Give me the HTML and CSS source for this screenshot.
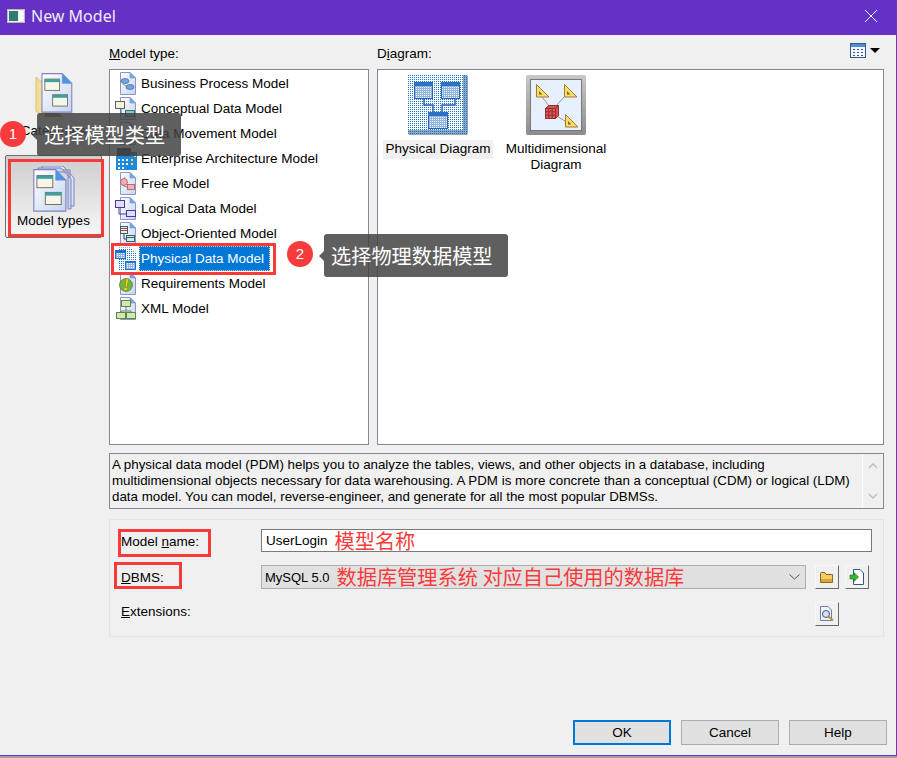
FILE: index.html
```html
<!DOCTYPE html>
<html lang="en">
<head>
    <meta charset="UTF-8">
    <title>New Model</title>
    <link rel="stylesheet" href="styles.css">
</head>
<body>
    <svg class="defs" width="0" height="0">
        <defs>
            <linearGradient id="pageFill" x1="0" y1="0" x2="1" y2="1">
                <stop offset="0" stop-color="#ffffff"/>
                <stop offset="1" stop-color="#c5d5f2"/>
            </linearGradient>
            <linearGradient id="frameFill" x1="0" y1="0" x2="0" y2="1">
                <stop offset="0" stop-color="#c8c8c8"/>
                <stop offset="1" stop-color="#8c8c8c"/>
            </linearGradient>
            <pattern id="dotsBlue" width="2" height="2" patternUnits="userSpaceOnUse">
                <rect width="2" height="2" fill="#fff"/>
                <rect width="1" height="1" fill="#1a74cf"/>
            </pattern>
            <pattern id="dotsFrame" width="2" height="2" patternUnits="userSpaceOnUse">
                <rect width="2" height="2" fill="#8fa7bf"/>
                <rect width="1" height="1" fill="#1a74cf"/>
            </pattern>
            <pattern id="dotsBar" width="2" height="2" patternUnits="userSpaceOnUse">
                <rect width="2" height="2" fill="#8fb4e2"/>
                <rect width="1" height="1" fill="#ffffff"/>
            </pattern>
            <symbol id="page" viewBox="0 0 20 24">
                <path d="M3.5.5H13L18.5 6V22.5H3.5Z" fill="url(#pageFill)" stroke="#8d96c0"/>
                <path d="M13 .5V6H18.5Z" fill="#6fa6e6" stroke="#7f95c8" stroke-width=".6"/>
            </symbol>
            <symbol id="bigPage" viewBox="0 0 36 46">
                <path d="M.7.7H24L35 12V45H.7Z" fill="url(#pageFill)" stroke="#8080c0" stroke-width="1.2"/>
                <path d="M24 .7V12H35Z" fill="#4f93e8" stroke="#7f95c8" stroke-width=".6"/>
                <rect x="4" y="7" width="17" height="13" fill="#f6f6ea" stroke="#6e6a55"/>
                <rect x="4" y="7" width="17" height="3.5" fill="#3f9ea0"/>
                <rect x="13" y="25" width="17" height="13" fill="#f6f6ea" stroke="#6e6a55"/>
                <rect x="13" y="25" width="17" height="3.5" fill="#3f9ea0"/>
            </symbol>
        </defs>
    </svg>

    <div class="dialog">
        <div class="titlebar">
            <svg class="title-icon" width="18" height="14" viewBox="0 0 18 14">
                <rect x=".5" y=".5" width="17" height="13" fill="#eef0ee" stroke="#b9b9b9"/>
                <rect x="2" y="2" width="9" height="10" fill="#2f7d72"/>
                <rect x="12" y="2" width="4" height="10" fill="#fff"/>
            </svg>
            <span class="title-text">New Model</span>
            <svg class="close-icon" width="12" height="12" viewBox="0 0 12 12">
                <path d="M0 0L12 12M12 0L0 12" stroke="#fff" stroke-width="1" fill="none"/>
            </svg>
        </div>

        <div class="top">
            <div class="sidebar">
                <div class="side-item">
                    <svg class="side-icon" width="38" height="46" viewBox="0 0 38 46">
                        <path d="M1 4L10 12V44L1 38Z" fill="#f3dd9a" stroke="#d9bf72"/>
                        <path d="M10 44H28L24 40H10Z" fill="#8f8458"/>
                        <use href="#bigPage" x="6" y="0" width="32" height="40"/>
                    </svg>
                    <span>Categories</span>
                </div>
                <div class="side-item side-active">
                    <svg class="side-icon" width="42" height="46" viewBox="0 0 42 46">
                        <path d="M9 0H30L41 12V40H37V4H9Z" fill="#dbe4f6" stroke="#8080c0"/>
                        <path d="M5 2H28L38 13V43H35V6H5Z" fill="#c5d5f2" stroke="#8080c0"/>
                        <use href="#bigPage" x="0" y="3" width="34" height="43"/>
                    </svg>
                    <span>Model types</span>
                </div>
            </div>

            <div class="pane pane-types">
                <div class="pane-label"><u>M</u>odel type:</div>
                <div class="box type-list">
                    <div class="type-row">
                        <svg class="type-icon" width="24" height="24" viewBox="0 0 24 24">
                            <use href="#page" x="2" y="0" width="20" height="24"/>
                            <path d="M8 12L15 17" stroke="#8a8a8a"/>
                            <ellipse cx="10" cy="9" rx="4" ry="2.5" fill="#6fa6e6" stroke="#44618f" stroke-width=".7"/>
                            <ellipse cx="15" cy="15" rx="4" ry="2.5" fill="#6fa6e6" stroke="#44618f" stroke-width=".7"/>
                        </svg>
                        <span class="type-name">Business Process Model</span>
                    </div>
                    <div class="type-row">
                        <svg class="type-icon" width="24" height="24" viewBox="0 0 24 24">
                            <use href="#page" x="2" y="0" width="20" height="24"/>
                            <path d="M6 10V17H10" stroke="#44618f" fill="none"/>
                            <rect x=".5" y="4.5" width="9" height="7" fill="#f5f3d8" stroke="#59665f"/>
                            <rect x="10.5" y="13.500" width="9" height="6" fill="#8fc4c8" stroke="#3c6f6f"/>
                        </svg>
                        <span class="type-name">Conceptual Data Model</span>
                    </div>
                    <div class="type-row">
                        <svg class="type-icon" width="24" height="24" viewBox="0 0 24 24">
                            <use href="#page" x="2" y="0" width="20" height="24"/>
                        </svg>
                        <span class="type-name">Data Movement Model</span>
                    </div>
                    <div class="type-row">
                        <svg class="type-icon" width="24" height="24" viewBox="0 0 24 24">
                            <rect x="2" y="1" width="14" height="8" fill="#33475e"/>
                            <rect x="15" y="5" width="7" height="6" fill="#1e88e0"/>
                            <rect x="1" y="9" width="21" height="14" fill="#1e88e0"/>
                            <path d="M3 12h2v2H3zM7 12h2v2H7zM11 12h2v2h-2zM3 16h2v2H3zM7 16h2v2H7zM11 16h2v2h-2zM3 20h2v2H3zM7 20h2v2H7z" fill="#fff"/>
                            <path d="M16 12h2v2h-2zM16 16h2v2h-2zM19 8h2v2h-2z" fill="#ffd84a"/>
                        </svg>
                        <span class="type-name">Enterprise Architecture Model</span>
                    </div>
                    <div class="type-row">
                        <svg class="type-icon" width="24" height="24" viewBox="0 0 24 24">
                            <use href="#page" x="2" y="0" width="20" height="24"/>
                            <path d="M10 5L7 13L14 16" stroke="#8a8a8a" fill="none"/>
                            <circle cx="9" cy="10" r="3.4" fill="#f5b0b0" stroke="#b05555" stroke-width=".8"/>
                            <rect x="12.5" y="12.5" width="7" height="5" fill="#f5b0b0" stroke="#b05555" stroke-width=".8"/>
                        </svg>
                        <span class="type-name">Free Model</span>
                    </div>
                    <div class="type-row">
                        <svg class="type-icon" width="24" height="24" viewBox="0 0 24 24">
                            <use href="#page" x="2" y="0" width="20" height="24"/>
                            <path d="M4 10V17H11" stroke="#4a3a9f" fill="none"/>
                            <rect x=".5" y="3.5" width="9" height="7" fill="#e4dcf5" stroke="#4a3a9f"/>
                            <rect x="11.5" y="13.5" width="9" height="6" fill="#e4dcf5" stroke="#4a3a9f"/>
                        </svg>
                        <span class="type-name">Logical Data Model</span>
                    </div>
                    <div class="type-row">
                        <svg class="type-icon" width="24" height="24" viewBox="0 0 24 24">
                            <use href="#page" x="2" y="0" width="20" height="24"/>
                            <path d="M9 12V17H12" stroke="#33475e" fill="none"/>
                            <rect x="5.5" y="4.5" width="7" height="7" fill="#e5f0f0" stroke="#33626f"/>
                            <path d="M6 6.5h6M6 8.5h6" stroke="#c23b3b"/>
                            <rect x="11.5" y="13.5" width="8" height="6" fill="#cfe8ea" stroke="#33626f"/>
                            <path d="M12 15.5h7" stroke="#33626f"/>
                        </svg>
                        <span class="type-name">Object-Oriented Model</span>
                    </div>
                    <div class="type-row type-selected">
                        <svg class="type-icon" width="24" height="24" viewBox="0 0 24 24">
                            <path d="M3 .5H15L21.5 6V23.5H3Z" fill="url(#dotsBlue)"/>
                            <rect x="0" y="3" width="11" height="9" fill="#1a74cf"/>
                            <rect x="1" y="6" width="9" height="5" fill="url(#dotsBar)"/>
                            <rect x="10" y="14" width="11" height="9" fill="#1a74cf"/>
                            <rect x="11" y="16" width="9" height="6" fill="url(#dotsBar)"/>
                        </svg>
                        <span class="type-name">Physical Data Model</span>
                    </div>
                    <div class="type-row">
                        <svg class="type-icon" width="24" height="24" viewBox="0 0 24 24">
                            <use href="#page" x="2" y="0" width="20" height="24"/>
                            <circle cx="11" cy="13" r="6.5" fill="#74b33c" stroke="#4d7c25" stroke-width=".7"/>
                            <path d="M11 6.5L13.5 7L12 15H10.2Z" fill="#f6d21f" stroke="#8d7a18" stroke-width=".5"/>
                            <circle cx="10.6" cy="17" r="1.3" fill="#f6d21f"/>
                        </svg>
                        <span class="type-name">Requirements Model</span>
                    </div>
                    <div class="type-row">
                        <svg class="type-icon" width="24" height="24" viewBox="0 0 24 24">
                            <use href="#page" x="2" y="0" width="20" height="24"/>
                            <path d="M11 9V14M6 14H16V16M6 14V16" stroke="#777" fill="none"/>
                            <rect x="6.5" y="3.5" width="9" height="6" fill="#cfe8b8" stroke="#5f8a3c"/>
                            <rect x="1.5" y="15.5" width="9" height="6" fill="#cfe8b8" stroke="#5f8a3c"/>
                            <rect x="11.5" y="15.5" width="9" height="6" fill="#cfe8b8" stroke="#5f8a3c"/>
                        </svg>
                        <span class="type-name">XML Model</span>
                    </div>
                </div>
            </div>

            <div class="pane pane-diagram">
                <div class="pane-label diagram-head">
                    <span>D<u>i</u>agram:</span>
                    <span class="view-switch">
                        <svg width="16" height="15" viewBox="0 0 16 15">
                            <rect x=".5" y=".5" width="15" height="14" fill="#f3f7fc" stroke="#35588a"/>
                            <rect x="1" y="1" width="14" height="3" fill="#4f8fd8"/>
                            <path d="M3 6h2v1H3zM7 6h2v1H7zM11 6h2v1h-2zM3 9h2v1H3zM7 9h2v1H7zM11 9h2v1h-2zM3 12h2v1H3zM7 12h2v1H7zM11 12h2v1h-2z" fill="#35588a"/>
                        </svg>
                        <span class="caret"></span>
                    </span>
                </div>
                <div class="box diagram-list">
                    <div class="diagram-item">
                        <svg width="60" height="60" viewBox="0 0 60 60">
                            <rect width="60" height="60" rx="2" fill="url(#dotsFrame)"/>
                            <rect x="0" y="0" width="55" height="55" fill="url(#dotsBlue)"/>
                            <path d="M16 23V30H25V37M47 23V30H34V37" stroke="#2a62b8" stroke-width="1.4" fill="none"/>
                            <rect x="6.5" y="7.5" width="18" height="16" fill="url(#dotsBar)" stroke="#2a62b8"/>
                            <rect x="6" y="7" width="19" height="4" fill="#2a72c4"/>
                            <rect x="33.5" y="7.5" width="18" height="16" fill="url(#dotsBar)" stroke="#2a62b8"/>
                            <rect x="33" y="7" width="19" height="4" fill="#2a72c4"/>
                            <rect x="20.5" y="37.5" width="19" height="16" fill="url(#dotsBar)" stroke="#2a62b8"/>
                            <rect x="20" y="37" width="20" height="4" fill="#2a72c4"/>
                        </svg>
                        <span class="diagram-name diagram-current">Physical Diagram</span>
                    </div>
                    <div class="diagram-item">
                        <svg width="60" height="60" viewBox="0 0 60 60">
                            <rect width="60" height="60" rx="2" fill="url(#frameFill)"/>
                            <rect x="4.5" y="4.5" width="51" height="51" fill="#e6f1fd" stroke="#777"/>
                            <path d="M16 22L24 32M38 22L30 31M31 41L42 48" stroke="#999" fill="none"/>
                            <path d="M10.5 9.5L23 22H10.5Z M38.5 9.5L51 22H38.5Z M39.500 39.500L52 52H39.500Z" fill="#fadf62" stroke="#a8763e"/>
                            <path d="M13 16L16.500 19.500H13Z M41 16L44.500 19.500H41Z M42 46L45.500 49.500H42Z" fill="#7a6238"/>
                            <path d="M19.500 33.500L22.500 30.500H32.500V40.500L29.500 43.500Z" fill="#d85050" stroke="#8d2f2f"/>
                            <rect x="19.500" y="33.500" width="10" height="10" fill="#e25b5b" stroke="#8d2f2f"/>
                            <path d="M19.500 36.800H29.500M19.500 40.200H29.500M22.800 33.500V43.500M26.200 33.500V43.500M29.500 33.500L32.500 30.500" stroke="#8d2f2f" fill="none"/>
                        </svg>
                        <span class="diagram-name">Multidimensional Diagram</span>
                    </div>
                </div>
            </div>
        </div>

        <div class="desc">
            <p>A physical data model (PDM) helps you to analyze the tables, views, and other objects in a database, including<br>multidimensional objects necessary for data warehousing. A PDM is more concrete than a conceptual (CDM) or logical (LDM)<br>data model. You can model, reverse-engineer, and generate for all the most popular DBMSs.</p>
            <div class="desc-scroll">
                <svg width="10" height="6" viewBox="0 0 10 6"><path d="M1 5L5 1L9 5" stroke="#bdbdbd" stroke-width="1.4" fill="none"/></svg>
                <svg width="10" height="6" viewBox="0 0 10 6"><path d="M1 1L5 5L9 1" stroke="#bdbdbd" stroke-width="1.4" fill="none"/></svg>
            </div>
        </div>

        <div class="group">
            <div class="form-row row-name">
                <div class="form-label">Model <u>n</u>ame:</div>
                <div class="text-input">UserLogin <span class="note note-name">模型名称</span></div>
            </div>
            <div class="form-row row-dbms">
                <div class="form-label"><u>D</u>BMS:</div>
                <div class="select-input">
                    <span class="select-value">MySQL 5.0</span>
                    <span class="note note-dbms">数据库管理系统 对应自己使用的数据库</span>
                    <svg class="select-arrow" width="11" height="6" viewBox="0 0 11 6"><path d="M.5.5L5.500 5L10.500.5" stroke="#555" fill="none"/></svg>
                </div>
                <div class="tool-btn">
                    <svg width="16" height="14" viewBox="0 0 16 14">
                        <path d="M1.500 3.500V12.500H13.500V4.500H7L6 2.500H2Z" fill="#f3cc62" stroke="#8d6a1f"/>
                        <rect x="2" y="9" width="11" height="3" fill="#dba63a"/>
                    </svg>
                </div>
                <div class="tool-btn">
                    <svg width="16" height="16" viewBox="0 0 16 16">
                        <path d="M4.500.5H11L14.500 4V15.500H4.500Z" fill="#fff" stroke="#35588a"/>
                        <path d="M1 6H5V3.500L9.500 8L5 12.500V10H1Z" fill="#39b52f" stroke="#1d6f1a" stroke-width=".6"/>
                    </svg>
                </div>
            </div>
            <div class="form-row row-ext">
                <div class="form-label"><u>E</u>xtensions:</div>
                <div class="tool-btn ext-btn">
                    <svg width="16" height="16" viewBox="0 0 16 16">
                        <path d="M1.500.5H9L12.500 4V14.500H1.500Z" fill="#eef3fb" stroke="#6b7fa8"/>
                        <circle cx="7" cy="8" r="3.500" fill="#cfe2f7" stroke="#555"/>
                        <path d="M9.500 10.500L14 14.500" stroke="#c8843a" stroke-width="2"/>
                    </svg>
                </div>
            </div>
        </div>

        <div class="footer">
            <div class="btn btn-default">OK</div>
            <div class="btn">Cancel</div>
            <div class="btn">Help</div>
        </div>

        <!-- annotations drawn over the screenshot -->
        <div class="mark mark-types"></div>
        <div class="mark mark-pdm"></div>
        <div class="mark mark-name"></div>
        <div class="mark mark-dbms"></div>

        <div class="badge badge-one">1</div>
        <div class="tip tip-one">选择模型类型</div>
        <div class="badge badge-two">2</div>
        <div class="tip tip-two">选择物理数据模型</div>
    </div>
</body>
</html>
```

FILE: styles.css
```css
* {
    box-sizing: border-box;
}
html, body {
    margin: 0;
    padding: 0;
}
body {
    font-family: "Liberation Sans", Arial, sans-serif;
    font-size: 13.5px;
    color: #000;
    background: #a0a0a0;
}
.defs {
    position: absolute;
}
.dialog {
    position: relative;
    display: flex;
    flex-direction: column;
    width: 897px;
    height: 756px;
    overflow: hidden;
    background: #f0f0f0;
    border-right: 1px solid #6a35c8;
    border-bottom: 1px solid #6a35c8;
}

/* title bar */
.titlebar {
    display: flex;
    align-items: center;
    flex: none;
    height: 35px;
    padding: 0 14px 4px 7px;
    background: #6530c5;
    color: #f0eafa;
}
.title-icon {
    margin-right: 6px;
}
.title-text {
    font-family: "Noto Sans", sans-serif;
    font-size: 16px;
}
.close-icon {
    margin-left: auto;
    margin-right: 5px;
}

/* top area */
.top {
    display: flex;
    flex: none;
    height: 410px;
}
.sidebar {
    flex: none;
    width: 109px;
    padding: 37px 7px 0 5px;
}
.side-item {
    display: flex;
    flex-direction: column;
    align-items: center;
    height: 83px;
    padding-top: 1px;
    text-align: center;
}
.side-item span {
    margin-top: 4px;
}
.side-active {
    padding-top: 10px;
    border: 1px solid #6f6f6f;
    border-radius: 2px;
    background: linear-gradient(#cdcdcd, #f7f7f7);
}
.side-active span {
    margin-top: 1px;
}
.pane {
    display: flex;
    flex-direction: column;
}
.pane-types {
    width: 260px;
}
.pane-diagram {
    width: 507px;
    margin-left: 8px;
}
.pane-label {
    height: 34px;
    padding-top: 11px;
}
.diagram-head {
    display: flex;
    justify-content: space-between;
    padding-top: 11px;
}
.view-switch {
    display: flex;
    align-items: center;
    height: 16px;
    margin-top: -4px;
    margin-right: 4px;
}
.caret {
    width: 0;
    height: 0;
    margin-left: 4px;
    border-top: 5px solid #000;
    border-left: 5px solid transparent;
    border-right: 5px solid transparent;
}
.box {
    flex: 1;
    background: #fff;
    border: 1px solid #828790;
}

/* model type list */
.type-list {
    padding-top: 1px;
}
.type-row {
    display: flex;
    align-items: center;
    height: 25px;
    padding-left: 5px;
}
.type-icon {
    flex: none;
}
.type-name {
    display: flex;
    align-items: center;
    height: 25px;
    padding: 0 6px 0 2px;
    white-space: nowrap;
}
.type-selected .type-name {
    background: #0078d7;
    color: #fff;
    outline: 1px dotted #f4c896;
    outline-offset: -1px;
}

/* diagram list */
.diagram-list {
    display: flex;
    align-items: flex-start;
    padding: 5px 0 0 1px;
}
.diagram-item {
    display: flex;
    flex-direction: column;
    align-items: center;
    width: 118px;
    text-align: center;
}
.diagram-name {
    width: 110px;
    margin-top: 5px;
    padding: 1px 0 2px;
    line-height: 16px;
}
.diagram-current {
    background: #f0f0f0;
}

/* description */
.desc {
    display: flex;
    flex: none;
    width: 775px;
    height: 56px;
    margin: 8px 0 0 109px;
    border: 1px solid #828790;
}
.desc p {
    flex: 1;
    margin: 0;
    padding: 3px 0 0 2px;
    font-size: 13.33px;
    line-height: 16px;
    white-space: nowrap;
}
.desc-scroll {
    display: flex;
    flex-direction: column;
    justify-content: space-between;
    align-items: center;
    flex: none;
    width: 21px;
    padding: 9px 0;
    border-left: 1px solid #fff;
}

/* form group */
.group {
    flex: none;
    width: 775px;
    height: 118px;
    margin: 10px 0 0 109px;
    padding: 9px 11px 0;
    border: 1px solid #e3e3e3;
}
.form-row {
    display: flex;
    align-items: center;
}
.form-label {
    flex: none;
    width: 140px;
}
.row-name .form-label {
    padding-top: 2px;
}
.row-ext .form-label {
    margin-top: -6px;
}
.row-name {
    height: 23px;
}
.row-dbms,
.row-ext {
    height: 24px;
    margin-top: 13px;
}
.text-input {
    display: flex;
    align-items: center;
    width: 611px;
    height: 23px;
    padding-left: 4px;
    background: #fff;
    border: 1px solid #7a7a7a;
}
.select-input {
    position: relative;
    display: flex;
    align-items: center;
    width: 545px;
    height: 24px;
    padding-left: 3px;
    background: #e1e1e1;
    border: 1px solid #adadad;
}
.select-value {
    font-size: 13px;
}
.select-arrow {
    margin-left: auto;
    margin-right: 5px;
}
.note {
    font-family: "Noto Sans CJK SC", sans-serif;
    font-size: 20.2px;
    color: #f73b3b;
    line-height: 22px;
    white-space: pre;
}
.note-name {
    margin-left: 7px;
}
.note-dbms {
    margin-left: 7px;
}
.tool-btn {
    display: flex;
    align-items: center;
    justify-content: center;
    flex: none;
    width: 24px;
    height: 24px;
    margin-left: 9px;
    background: #f0f0f0;
    border: 1px solid;
    border-color: #f8f8f8 #696969 #696969 #f8f8f8;
}
.tool-btn + .tool-btn {
    margin-left: 6px;
}
.ext-btn {
    margin-left: 554px;
}

/* footer buttons */
.footer {
    display: flex;
    justify-content: flex-end;
    gap: 10px;
    margin-top: auto;
    padding: 0 9px 10px 0;
}
.btn {
    display: flex;
    align-items: center;
    justify-content: center;
    width: 98px;
    height: 25px;
    background: #e1e1e1;
    border: 1px solid #adadad;
}
.btn-default {
    border: 2px solid #0078d7;
}

/* annotations */
.mark {
    position: absolute;
    border: 3px solid #f73b3b;
}
.mark-types {
    left: 8px;
    top: 159px;
    width: 96px;
    height: 78px;
}
.mark-pdm {
    left: 111px;
    top: 243px;
    width: 165px;
    height: 32px;
}
.mark-name {
    left: 118px;
    top: 529px;
    width: 93px;
    height: 28px;
}
.mark-dbms {
    left: 114px;
    top: 562px;
    width: 68px;
    height: 27px;
}
.badge {
    position: absolute;
    width: 26px;
    height: 26px;
    border-radius: 50%;
    background: #f73b3b;
    color: #fff;
    font-size: 15px;
    line-height: 26px;
    text-align: center;
}
.badge-one {
    left: 0;
    top: 121px;
}
.badge-two {
    left: 287px;
    top: 241px;
}
.tip {
    position: absolute;
    height: 43px;
    padding-top: 9px;
    background: rgba(64, 64, 64, 0.84);
    border-radius: 3px;
    color: #fff;
    font-family: "Noto Sans CJK SC", sans-serif;
    font-size: 20.2px;
    line-height: 25px;
}
.tip::before {
    content: "";
    position: absolute;
    left: -5px;
    top: 17px;
    border-top: 5px solid transparent;
    border-bottom: 5px solid transparent;
    border-right: 5px solid rgba(64, 64, 64, 0.84);
}
.tip-one {
    left: 37px;
    top: 113px;
    width: 144px;
    padding-left: 7px;
}
.tip-two {
    left: 324px;
    top: 234px;
    width: 184px;
    padding-left: 7px;
}
```
